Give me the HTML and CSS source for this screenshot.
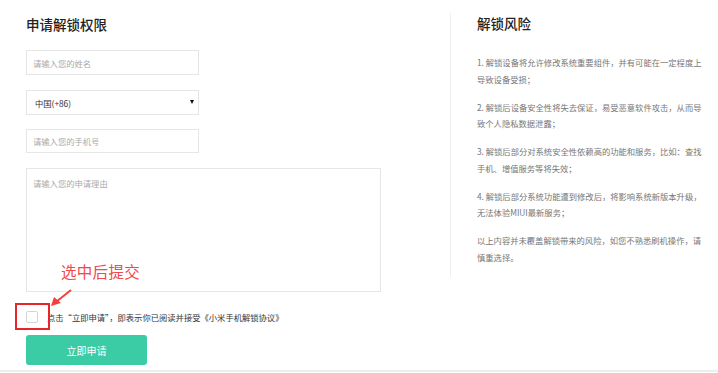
FILE: index.html
```html
<!DOCTYPE html>
<html lang="zh-CN">
<head>
    <meta charset="UTF-8">
    <meta name="viewport" content="width=device-width, initial-scale=1.0">
    <title>申请解锁权限</title>
    <link rel="stylesheet" href="styles.css">
</head>
<body>

    <div class="page">
        <!-- 左侧：申请表单 -->
        <div class="apply">
            <h2 class="title">申请解锁权限</h2>

            <div class="form">
                <input class="field" type="text" placeholder="请输入您的姓名">
                <div class="select-wrap">
                    <select class="field select">
                        <option>中国(+86)</option>
                    </select>
                </div>
                <input class="field" type="text" placeholder="请输入您的手机号">
                <textarea class="field reason" placeholder="请输入您的申请理由"></textarea>
            </div>

            <div class="agree">
                <span class="checkbox"></span>
                <span class="agree-text">点击“立即申请”，即表示你已阅读并接受《小米手机解锁协议》</span>
            </div>

            <button class="submit">立即申请</button>

            <!-- 标注 -->
            <div class="note-text">选中后提交</div>
            <div class="note-box"></div>
            <svg class="note-arrow" width="24" height="18" viewBox="0 0 24 18">
                <line x1="21" y1="1" x2="6" y2="13" stroke="#f2403f" stroke-width="2"/>
                <polygon points="1,17 4,8 11,14" fill="#f2403f"/>
            </svg>
        </div>

        <!-- 右侧：解锁风险 -->
        <div class="risk">
            <h2 class="title">解锁风险</h2>
            <p>1. 解锁设备将允许修改系统重要组件，并有可能在一定程度上导致设备受损；</p>
            <p>2. 解锁后设备安全性将失去保证，易受恶意软件攻击，从而导致个人隐私数据泄露；</p>
            <p>3. 解锁后部分对系统安全性依赖高的功能和服务，比如：查找手机、增值服务等将失效；</p>
            <p>4. 解锁后部分系统功能遭到修改后，将影响系统新版本升级，无法体验MIUI最新服务；</p>
            <p>以上内容并未覆盖解锁带来的风险，如您不熟悉刷机操作，请慎重选择。</p>
        </div>
    </div>

</body>
</html>
```

FILE: styles.css
```css
body {
    margin: 0;
    padding: 0;
    background: #fff;
    font-family: "Microsoft YaHei", "Noto Sans CJK SC", sans-serif;
    color: #333;
}

.page {
    display: flex;
    align-items: flex-start;
    padding-bottom: 5px;
    border-bottom: 2px solid #eeeeee;
}

.title {
    margin: 0;
    font-size: 13.5px;
    font-weight: 500;
    line-height: 20px;
    color: #222;
}

/* 左侧表单 */
.apply {
    position: relative;
    width: 424px;
    padding: 14px 0 0 26px;
}

.form {
    display: flex;
    flex-direction: column;
    gap: 15px;
    margin-top: 16px;
}

.field {
    display: block;
    box-sizing: border-box;
    width: 173px;
    height: 24px;
    padding: 0 6px;
    border: 1px solid #e6e6e6;
    border-radius: 0;
    background: #fff;
    font-family: inherit;
    font-size: 8.3px;
    color: #333;
    outline: none;
}

.field:first-child {
    height: 25px;
}

.field::placeholder {
    color: #aaa;
}

.select-wrap {
    position: relative;
    width: 173px;
    height: 24px;
}

.select {
    appearance: none;
    -webkit-appearance: none;
    padding-left: 8px;
}

.select-wrap::after {
    content: "";
    position: absolute;
    right: 5px;
    top: 10px;
    border-left: 2.5px solid transparent;
    border-right: 2.5px solid transparent;
    border-top: 4px solid #111;
}

.reason {
    width: 355px;
    height: 124px;
    padding-top: 8px;
    resize: none;
    line-height: 12px;
}

.agree {
    display: flex;
    align-items: center;
    margin-top: 19px;
    height: 12px;
}

.checkbox {
    box-sizing: border-box;
    width: 12px;
    height: 12px;
    border: 1px solid #d4d4d4;
    border-radius: 2px;
    background: #fff;
}

.agree-text {
    margin-left: 9px;
    font-size: 8.3px;
    color: #333;
    line-height: 12px;
}

.submit {
    display: block;
    width: 121px;
    height: 30px;
    margin-top: 12px;
    border: none;
    border-radius: 3px;
    background-color: #3bcba5;
    color: #fff;
    font-family: inherit;
    font-size: 10px;
    cursor: pointer;
}

/* 红色标注 */
.note-text {
    position: absolute;
    left: 61px;
    top: 261px;
    font-size: 15.5px;
    line-height: 20px;
    color: #f2484b;
    letter-spacing: 0.3px;
}

.note-box {
    position: absolute;
    left: 15px;
    top: 303px;
    width: 31px;
    height: 23px;
    border: 2px solid #e8262a;
}

.note-arrow {
    position: absolute;
    left: 50px;
    top: 289px;
}

/* 右侧风险说明 */
.risk {
    box-sizing: border-box;
    width: 254px;
    height: 264px;
    margin-top: 13px;
    padding-left: 26px;
    border-left: 1px solid #eeeeee;
}

.risk .title {
    margin-bottom: 21px;
}

.risk p {
    width: 228px;
    margin: 0 0 11.5px;
    font-size: 8.3px;
    line-height: 16.5px;
    color: #777;
}
```
